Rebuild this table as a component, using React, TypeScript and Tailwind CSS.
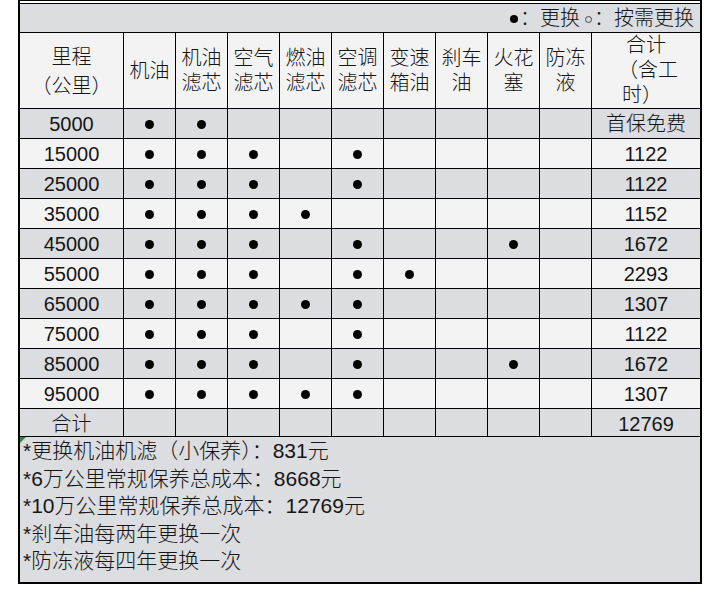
const COLUMNS = [
  ['机油'],
  ['机油', '滤芯'],
  ['空气', '滤芯'],
  ['燃油', '滤芯'],
  ['空调', '滤芯'],
  ['变速', '箱油'],
  ['刹车', '油'],
  ['火花', '塞'],
  ['防冻', '液'],
];

// index of columns that get a dot: 0 机油 1 机滤 2 空气 3 燃油 4 空调 5 变速箱油 6 刹车油 7 火花塞 8 防冻液
const ROWS: { km: string; items: number[]; total: string }[] = [
  { km: '5000', items: [0, 1], total: '首保免费' },
  { km: '15000', items: [0, 1, 2, 4], total: '1122' },
  { km: '25000', items: [0, 1, 2, 4], total: '1122' },
  { km: '35000', items: [0, 1, 2, 3], total: '1152' },
  { km: '45000', items: [0, 1, 2, 4, 7], total: '1672' },
  { km: '55000', items: [0, 1, 2, 4, 5], total: '2293' },
  { km: '65000', items: [0, 1, 2, 3, 4], total: '1307' },
  { km: '75000', items: [0, 1, 2, 4], total: '1122' },
  { km: '85000', items: [0, 1, 2, 4, 7], total: '1672' },
  { km: '95000', items: [0, 1, 2, 3, 4], total: '1307' },
];

const NOTES = [
  '*更换机油机滤（小保养）：831元',
  '*6万公里常规保养总成本：8668元',
  '*10万公里常规保养总成本：12769元',
  '*刹车油每两年更换一次',
  '*防冻液每四年更换一次',
];

const GRID = 'grid grid-cols-[104px_repeat(9,52px)_108px]';
const FONT = { fontFamily: '"Liberation Sans", "Noto Sans CJK SC", sans-serif' };

const Dot = () => <span className="block w-[9px] h-[9px] rounded-full bg-black" />;

const App = () => {
  return (
    <div className="w-[720px] h-[604px] bg-white text-[#151515] font-light" style={FONT}>
      <div className="ml-[18px] w-[684px] border-t border-x-2 border-b-2 border-black">
        {/* top strip */}
        <div className="h-[3px] bg-white border-b border-black" />

        {/* legend */}
        <div className="h-[29px] bg-[#dcdde0] border-b border-black flex items-center justify-end pr-[6px] text-[20px] leading-none">
          <span className="inline-block w-[8px] h-[8px] rounded-full bg-black mt-[2px]" />
          <span className="ml-[2px]">：</span>
          <span>更换</span>
          <span className="inline-block w-[7px] h-[7px] rounded-full border border-[#444] ml-[5px] mt-[2px]" />
          <span className="ml-[2px]">：</span>
          <span>按需更换</span>
        </div>

        {/* header */}
        <div className={`${GRID} h-[76px] bg-[#f3f3f4] border-b border-black text-[20px]`}>
          <div className="border-r border-black flex flex-col items-center justify-center leading-[29px] pt-[2px]">
            <span>里程</span>
            <span>（公里）</span>
          </div>
          {COLUMNS.map((lines, i) => (
            <div key={i} className="border-r border-black flex flex-col items-center justify-center leading-[25px] pt-[1px]">
              {lines.map((l) => (
                <span key={l}>{l}</span>
              ))}
            </div>
          ))}
          <div className="flex flex-col items-center justify-center leading-[25px]">
            <span>合计</span>
            <span className="pl-[4px]">（含工</span>
            <span className="pr-[8px]">时）</span>
          </div>
        </div>

        {/* body rows */}
        {ROWS.map((row, r) => (
          <div
            key={row.km}
            className={`${GRID} h-[30px] border-b border-black text-[20px] ${r % 2 === 0 ? 'bg-[#dcdde0]' : 'bg-[#f3f3f4]'}`}
          >
            <div className="border-r border-black flex items-center justify-center">{row.km}</div>
            {COLUMNS.map((_, c) => (
              <div key={c} className="border-r border-black flex items-center justify-center">
                {row.items.includes(c) && <Dot />}
              </div>
            ))}
            <div className="flex items-center justify-center">{row.total}</div>
          </div>
        ))}

        {/* sum row */}
        <div className={`${GRID} h-[28px] border-b border-black bg-[#dcdde0] text-[20px]`}>
          <div className="border-r border-black flex items-center justify-center">合计</div>
          {COLUMNS.map((_, c) => (
            <div key={c} className="border-r border-black" />
          ))}
          <div className="flex items-center justify-center">12769</div>
        </div>

        {/* notes */}
        <div className="relative h-[145px] bg-[#dcdde0] pl-[3px] text-[21px] leading-[27.5px]">
          <span className="absolute left-0 top-0 w-0 h-0 border-t-[6px] border-r-[6px] border-t-[#2f8a3c] border-r-transparent" />
          {NOTES.map((n) => (
            <div key={n}>{n}</div>
          ))}
        </div>
      </div>
    </div>
  );
};

export default App;
